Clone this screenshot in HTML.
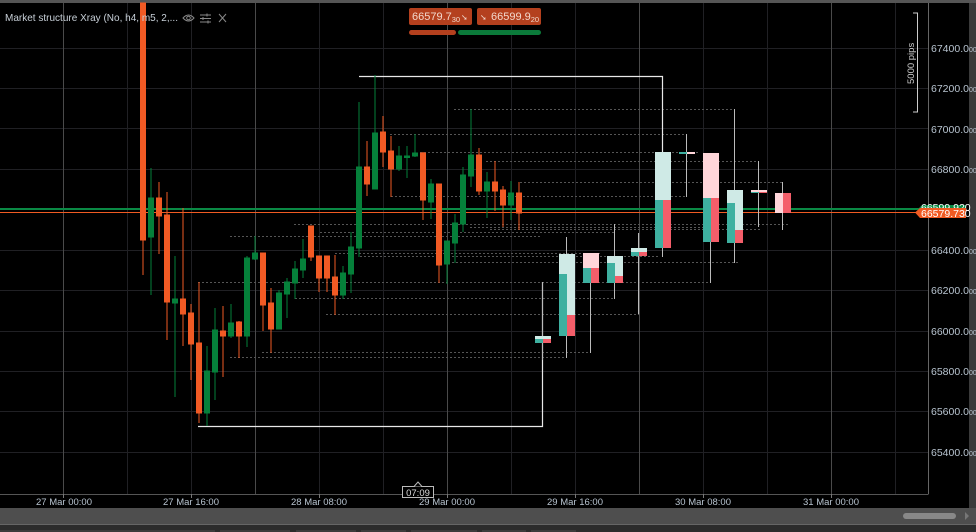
<!DOCTYPE html>
<html><head><meta charset="utf-8"><style>
html,body{margin:0;padding:0;background:#000;width:976px;height:532px;overflow:hidden}
svg{display:block}
text{font-family:"Liberation Sans",sans-serif}
</style></head><body>
<svg width="976" height="532" viewBox="0 0 976 532" xmlns="http://www.w3.org/2000/svg">
<rect x="0" y="0" width="976" height="532" fill="#3a3a3a"/>
<rect x="0" y="3" width="969" height="505" fill="#000"/>
<rect x="0" y="0" width="976" height="3" fill="#555"/>
<g stroke="#202024" stroke-width="1">
<line x1="0" y1="48.5" x2="928" y2="48.5"/><line x1="0" y1="88.5" x2="928" y2="88.5"/><line x1="0" y1="128.5" x2="928" y2="128.5"/><line x1="0" y1="169.5" x2="928" y2="169.5"/><line x1="0" y1="209.5" x2="928" y2="209.5"/><line x1="0" y1="250.5" x2="928" y2="250.5"/><line x1="0" y1="290.5" x2="928" y2="290.5"/><line x1="0" y1="331.5" x2="928" y2="331.5"/><line x1="0" y1="371.5" x2="928" y2="371.5"/><line x1="0" y1="411.5" x2="928" y2="411.5"/><line x1="0" y1="452.5" x2="928" y2="452.5"/>
<line x1="127.5" y1="3" x2="127.5" y2="494"/><line x1="191.5" y1="3" x2="191.5" y2="494"/><line x1="319.5" y1="3" x2="319.5" y2="494"/><line x1="383.5" y1="3" x2="383.5" y2="494"/><line x1="511.5" y1="3" x2="511.5" y2="494"/><line x1="575.5" y1="3" x2="575.5" y2="494"/><line x1="703.5" y1="3" x2="703.5" y2="494"/><line x1="767.5" y1="3" x2="767.5" y2="494"/><line x1="895.5" y1="3" x2="895.5" y2="494"/>
</g>
<g stroke="#4a4a4a" stroke-width="1">
<line x1="63.5" y1="3" x2="63.5" y2="494"/><line x1="255.5" y1="3" x2="255.5" y2="494"/><line x1="447.5" y1="3" x2="447.5" y2="494"/><line x1="639.5" y1="3" x2="639.5" y2="494"/><line x1="831.5" y1="3" x2="831.5" y2="494"/>
</g>
<g stroke="#555" stroke-width="1" stroke-dasharray="2,2">
<line x1="454" y1="109.5" x2="734" y2="109.5"/>
<line x1="390" y1="134.5" x2="686" y2="134.5"/>
<line x1="420" y1="152.5" x2="700" y2="152.5"/>
<line x1="486" y1="161.5" x2="757" y2="161.5"/>
<line x1="520" y1="182.5" x2="783" y2="182.5"/>
<line x1="391" y1="196.5" x2="686" y2="196.5"/>
<line x1="294" y1="224.5" x2="790" y2="224.5"/>
<line x1="470" y1="227.5" x2="710" y2="227.5"/>
<line x1="490" y1="229.5" x2="760" y2="229.5"/>
<line x1="320" y1="232.5" x2="614" y2="232.5"/>
<line x1="230" y1="236.5" x2="540" y2="236.5"/>
<line x1="335" y1="253.5" x2="600" y2="253.5"/>
<line x1="360" y1="256.5" x2="660" y2="256.5"/>
<line x1="440" y1="262.5" x2="740" y2="262.5"/>
<line x1="198" y1="282.5" x2="710" y2="282.5"/>
<line x1="295" y1="298.5" x2="614" y2="298.5"/>
<line x1="326" y1="314.5" x2="639" y2="314.5"/>
<line x1="262" y1="352.5" x2="590" y2="352.5"/>
<line x1="230" y1="357.5" x2="566" y2="357.5"/>
</g>
<g stroke="#e8e8e8" stroke-width="1.2" fill="none">
<polyline points="359,76.5 662.5,76.5 662.5,152"/>
<polyline points="198,426.5 542.5,426.5 542.5,282"/>
</g>
<line x1="0" y1="209" x2="928" y2="209" stroke="#0a8a45" stroke-width="2"/>
<line x1="0" y1="212.5" x2="928" y2="212.5" stroke="#f05a22" stroke-width="1"/>
<g stroke-width="1">
<g fill="#f15a24" stroke="#f15a24">
<line x1="143" y1="3" x2="143" y2="275"/><rect x="140.5" y="3" width="5" height="237"/>
<line x1="159" y1="182" x2="159" y2="254"/><rect x="156.5" y="198" width="5" height="18"/>
<line x1="167" y1="192" x2="167" y2="340"/><rect x="164.5" y="215" width="5" height="87"/>
<line x1="183" y1="208" x2="183" y2="346"/><rect x="180.5" y="299" width="5" height="15"/>
<line x1="191" y1="304" x2="191" y2="380"/><rect x="188.5" y="313" width="5" height="31"/>
<line x1="199" y1="282" x2="199" y2="423"/><rect x="196.5" y="343" width="5" height="70"/>
<line x1="223" y1="306" x2="223" y2="377"/><rect x="220.5" y="331" width="5" height="5"/>
<line x1="239" y1="321" x2="239" y2="358"/><rect x="236.5" y="322" width="5" height="14"/>
<line x1="263" y1="253" x2="263" y2="331"/><rect x="260.5" y="253" width="5" height="52"/>
<line x1="271" y1="288" x2="271" y2="353"/><rect x="268.5" y="303" width="5" height="26"/>
<line x1="311" y1="226" x2="311" y2="261"/><rect x="308.5" y="226" width="5" height="31"/>
<line x1="319" y1="256" x2="319" y2="292"/><rect x="316.5" y="256" width="5" height="22"/>
<line x1="327" y1="256" x2="327" y2="292"/><rect x="324.5" y="256" width="5" height="22"/>
<line x1="335" y1="255" x2="335" y2="315"/><rect x="332.5" y="277" width="5" height="18"/>
<line x1="367" y1="141" x2="367" y2="196"/><rect x="364.5" y="167" width="5" height="17"/>
<line x1="383" y1="116" x2="383" y2="167"/><rect x="380.5" y="132" width="5" height="20"/>
<line x1="391" y1="136" x2="391" y2="197"/><rect x="388.5" y="151" width="5" height="18"/>
<line x1="423" y1="152" x2="423" y2="220"/><rect x="420.5" y="153" width="5" height="47"/>
<line x1="439" y1="184" x2="439" y2="283"/><rect x="436.5" y="184" width="5" height="81"/>
<line x1="479" y1="148" x2="479" y2="195"/><rect x="476.5" y="155" width="5" height="36"/>
<line x1="495" y1="161" x2="495" y2="211"/><rect x="492.5" y="182" width="5" height="9"/>
<line x1="503" y1="186" x2="503" y2="227"/><rect x="500.5" y="190" width="5" height="15"/>
<line x1="519" y1="182" x2="519" y2="230"/><rect x="516.5" y="193" width="5" height="20"/>
</g>
<g fill="#05803a" stroke="#05803a">
<line x1="151" y1="168" x2="151" y2="295"/><rect x="148.5" y="198" width="5" height="39"/>
<line x1="175" y1="256" x2="175" y2="397"/><rect x="172.5" y="299" width="5" height="4"/>
<line x1="207" y1="346" x2="207" y2="426"/><rect x="204.5" y="371" width="5" height="42"/>
<line x1="215" y1="308" x2="215" y2="400"/><rect x="212.5" y="330" width="5" height="42"/>
<line x1="231" y1="304" x2="231" y2="338"/><rect x="228.5" y="323" width="5" height="13"/>
<line x1="247" y1="256" x2="247" y2="347"/><rect x="244.5" y="258" width="5" height="78"/>
<line x1="255" y1="236" x2="255" y2="260"/><rect x="252.5" y="253" width="5" height="6"/>
<line x1="279" y1="290" x2="279" y2="329"/><rect x="276.5" y="293" width="5" height="36"/>
<line x1="287" y1="278" x2="287" y2="318"/><rect x="284.5" y="282" width="5" height="12"/>
<line x1="295" y1="261" x2="295" y2="299"/><rect x="292.5" y="269" width="5" height="14"/>
<line x1="303" y1="239" x2="303" y2="278"/><rect x="300.5" y="259" width="5" height="11"/>
<line x1="343" y1="266" x2="343" y2="299"/><rect x="340.5" y="273" width="5" height="22"/>
<line x1="351" y1="232" x2="351" y2="293"/><rect x="348.5" y="247" width="5" height="27"/>
<line x1="359" y1="102" x2="359" y2="257"/><rect x="356.5" y="167" width="5" height="81"/>
<line x1="375" y1="75" x2="375" y2="189"/><rect x="372.5" y="133" width="5" height="56"/>
<line x1="399" y1="146" x2="399" y2="171"/><rect x="396.5" y="156" width="5" height="13"/>
<line x1="407" y1="146" x2="407" y2="178"/><rect x="404.5" y="156" width="5" height="1.5"/>
<line x1="415" y1="134" x2="415" y2="157"/><rect x="412.5" y="153" width="5" height="3"/>
<line x1="431" y1="179" x2="431" y2="219"/><rect x="428.5" y="184" width="5" height="18"/>
<line x1="447" y1="241" x2="447" y2="284"/><rect x="444.5" y="241" width="5" height="23"/>
<line x1="455" y1="214" x2="455" y2="263"/><rect x="452.5" y="223" width="5" height="20"/>
<line x1="463" y1="167" x2="463" y2="232"/><rect x="460.5" y="175" width="5" height="49"/>
<line x1="471" y1="109" x2="471" y2="187"/><rect x="468.5" y="155" width="5" height="21"/>
<line x1="487" y1="172" x2="487" y2="218"/><rect x="484.5" y="182" width="5" height="9"/>
<line x1="511" y1="181" x2="511" y2="220"/><rect x="508.5" y="193" width="5" height="12"/>
</g>
</g>
<g stroke="#bbb" stroke-width="1">
<line x1="542.5" y1="282" x2="542.5" y2="360"/>
<line x1="566.5" y1="237" x2="566.5" y2="358"/>
<line x1="590.5" y1="283" x2="590.5" y2="353"/>
<line x1="614.5" y1="224" x2="614.5" y2="299"/>
<line x1="638.5" y1="233" x2="638.5" y2="314"/>
<line x1="662.5" y1="152" x2="662.5" y2="257"/>
<line x1="686.5" y1="134" x2="686.5" y2="197"/>
<line x1="710.5" y1="198" x2="710.5" y2="283"/>
<line x1="734.5" y1="109" x2="734.5" y2="263"/>
<line x1="758.5" y1="161" x2="758.5" y2="227"/>
<line x1="782.5" y1="182" x2="782.5" y2="230"/>
</g>
<g>
<rect x="535" y="336" width="16" height="3" fill="#cfeae6"/><rect x="535" y="339" width="8" height="4" fill="#3eb0a0"/><rect x="543" y="339" width="8" height="4" fill="#f45e6a"/>
<rect x="559" y="254" width="16" height="82" fill="#cfeae6"/><rect x="559" y="274" width="8" height="62" fill="#3eb0a0"/><rect x="567" y="315" width="8" height="21" fill="#f45e6a"/>
<rect x="583" y="253" width="16" height="15" fill="#ffd6da"/><rect x="583" y="268" width="8" height="15" fill="#3eb0a0"/><rect x="591" y="268" width="8" height="15" fill="#f45e6a"/>
<rect x="607" y="256" width="16" height="27" fill="#cfeae6"/><rect x="607" y="263" width="8" height="20" fill="#3eb0a0"/><rect x="615" y="276" width="8" height="7" fill="#f45e6a"/>
<rect x="631" y="248" width="16" height="4" fill="#cfeae6"/><rect x="631" y="252" width="8" height="4" fill="#3eb0a0"/><rect x="639" y="252" width="8" height="4" fill="#f45e6a"/>
<rect x="655" y="152" width="16" height="48" fill="#cfeae6"/><rect x="655" y="200" width="8" height="48" fill="#3eb0a0"/><rect x="663" y="200" width="8" height="48" fill="#f45e6a"/>
<rect x="679" y="152" width="8" height="2" fill="#3eb0a0"/><rect x="687" y="152" width="8" height="2" fill="#ffd6da"/>
<rect x="703" y="153" width="16" height="45" fill="#ffd6da"/><rect x="703" y="198" width="8" height="44" fill="#3eb0a0"/><rect x="711" y="198" width="8" height="44" fill="#f45e6a"/>
<rect x="727" y="190" width="16" height="53" fill="#cfeae6"/><rect x="727" y="203" width="8" height="40" fill="#3eb0a0"/><rect x="735" y="230" width="8" height="13" fill="#f45e6a"/>
<rect x="751" y="190" width="16" height="2" fill="#ffd6da"/><rect x="751" y="192" width="8" height="1" fill="#3eb0a0"/><rect x="759" y="192" width="8" height="1" fill="#f45e6a"/>
<rect x="775" y="193" width="8" height="20" fill="#ffd6da"/><rect x="783" y="193" width="8" height="20" fill="#f45e6a"/>
</g>
<line x1="928.5" y1="3" x2="928.5" y2="494" stroke="#666"/>
<line x1="0" y1="494.5" x2="928.5" y2="494.5" stroke="#555"/>
<g fill="#b8c4d0" font-size="10.5">
<text x="931" y="52">67400.0<tspan font-size="7">00</tspan></text>
<text x="931" y="92">67200.0<tspan font-size="7">00</tspan></text>
<text x="931" y="133">67000.0<tspan font-size="7">00</tspan></text>
<text x="931" y="173">66800.0<tspan font-size="7">00</tspan></text>
<text x="931" y="254">66400.0<tspan font-size="7">00</tspan></text>
<text x="931" y="294">66200.0<tspan font-size="7">00</tspan></text>
<text x="931" y="335">66000.0<tspan font-size="7">00</tspan></text>
<text x="931" y="375">65800.0<tspan font-size="7">00</tspan></text>
<text x="931" y="415">65600.0<tspan font-size="7">00</tspan></text>
<text x="931" y="456">65400.0<tspan font-size="7">00</tspan></text>
</g>
<polygon points="918,209 922,205 966,205 966,211 918,211" fill="#0a8a45"/>
<text x="921" y="211" fill="#fff" font-size="10.5">66599.920</text>
<polygon points="915,212.5 920,208 966,208 966,218 920,218" fill="#f05a22"/>
<text x="921" y="217" fill="#fff" font-size="10.5">66579.730</text>
<polyline points="913,13 917.5,13 917.5,112 913,112" fill="none" stroke="#ccc"/>
<text transform="translate(914,84) rotate(-90)" fill="#ccc" font-size="9.5">5000 pips</text>
<g stroke="#777"><line x1="63.5" y1="494" x2="63.5" y2="498"/><line x1="191.5" y1="494" x2="191.5" y2="498"/><line x1="319.5" y1="494" x2="319.5" y2="498"/><line x1="447.5" y1="494" x2="447.5" y2="498"/><line x1="575.5" y1="494" x2="575.5" y2="498"/><line x1="703.5" y1="494" x2="703.5" y2="498"/><line x1="831.5" y1="494" x2="831.5" y2="498"/></g>
<g fill="#b8c4d0" font-size="9.5" text-anchor="middle">
<text x="64" y="505">27 Mar 00:00</text><text x="191" y="505">27 Mar 16:00</text><text x="319" y="505">28 Mar 08:00</text><text x="447" y="505">29 Mar 00:00</text><text x="575" y="505">29 Mar 16:00</text><text x="703" y="505">30 Mar 08:00</text><text x="831" y="505">31 Mar 00:00</text>
</g>
<rect x="402.5" y="486.5" width="31" height="11" fill="#000" stroke="#bbb"/>
<polyline points="414,486.5 418,482 422,486.5" fill="#000" stroke="#bbb"/>
<text x="418" y="496" fill="#ddd" font-size="9.5" text-anchor="middle">07:09</text>
<rect x="0" y="508" width="976" height="16" fill="#4e4e4e"/>
<rect x="903" y="513" width="53" height="6" rx="3" fill="#888"/>
<polygon points="965,512 969,516 965,520" fill="#777"/>
<rect x="0" y="524" width="976" height="8" fill="#2c2c2c"/>
<rect x="0" y="524" width="976" height="1" fill="#666"/>
<g fill="#3c3c3c"><rect x="0" y="530" width="215" height="2"/><rect x="220" y="530" width="70" height="2"/><rect x="296" y="530" width="60" height="2"/><rect x="361" y="530" width="45" height="2"/><rect x="411" y="530" width="66" height="2"/><rect x="482" y="530" width="44" height="2"/><rect x="531" y="530" width="45" height="2"/></g>
<text x="5" y="21" fill="#c8d0d8" font-size="10.5" textLength="173" lengthAdjust="spacingAndGlyphs">Market structure Xray (No, h4, m5, 2,...</text>
<g stroke="#888" fill="none" stroke-width="1">
<path d="M183,18 Q188.5,12 194,18 Q188.5,24 183,18Z"/><circle cx="188.5" cy="18" r="1.8"/>
<path d="M200,15h11M200,18.5h11M200,22h11"/><path d="M207,13.5v3M203,17v3M208,20.5v3"/>
<path d="M219,14l7,8M226,14l-7,8"/>
</g>
<rect x="409" y="8" width="63" height="17" rx="2" fill="#b4401e"/>
<text x="412" y="20" fill="#f2d8cc" font-size="11">66579.7<tspan font-size="7.5" dy="2">30</tspan></text>
<text x="461" y="20" fill="#f2d8cc" font-size="8">➘</text>
<rect x="477" y="8" width="64" height="17" rx="2" fill="#b4401e"/>
<text x="480" y="20" fill="#f2d8cc" font-size="8">➘</text>
<text x="491" y="20" fill="#f2d8cc" font-size="11">66599.9<tspan font-size="7.5" dy="2">20</tspan></text>
<rect x="409" y="30" width="47" height="5" rx="2.5" fill="#b4401e"/>
<rect x="458" y="30" width="83" height="5" rx="2.5" fill="#0b7a3a"/>
</svg>
</body></html>
